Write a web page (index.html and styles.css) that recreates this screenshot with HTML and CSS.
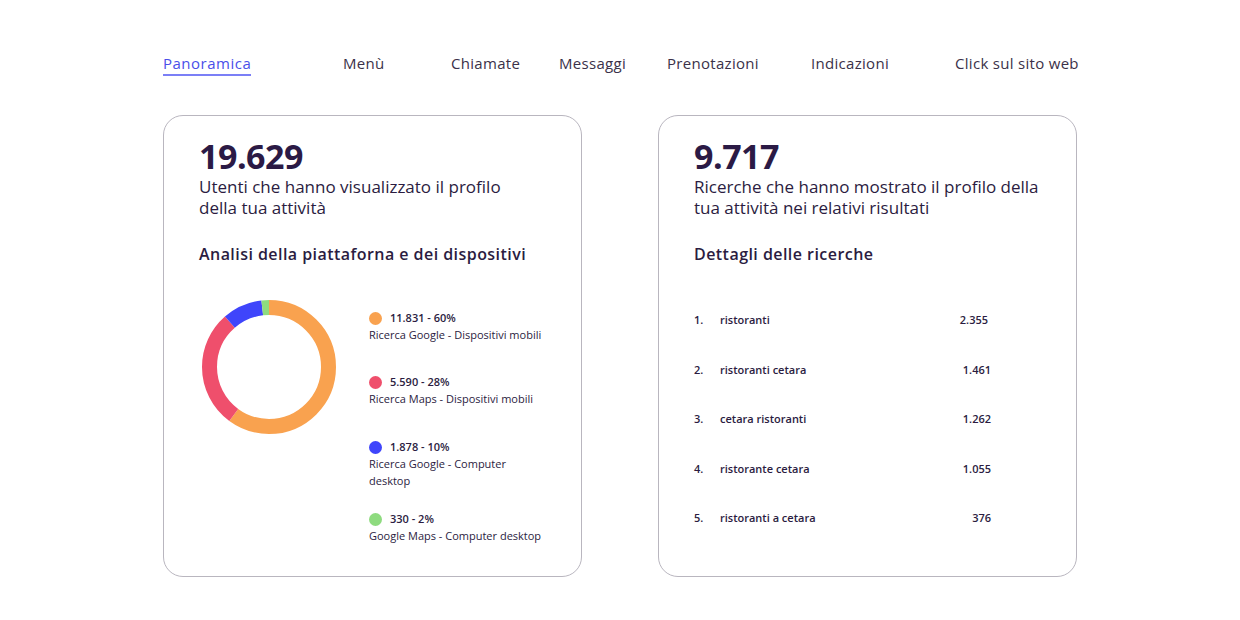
FILE: index.html
```html
<!DOCTYPE html>
<html lang="it">
<head>
<meta charset="utf-8">
<title>Panoramica</title>
<link rel="stylesheet" href="styles.css">
</head>
<body>
<div class="page">
  <nav class="tabs">
    <a class="tab active">Panoramica</a>
    <a class="tab">Menù</a>
    <a class="tab">Chiamate</a>
    <a class="tab">Messaggi</a>
    <a class="tab">Prenotazioni</a>
    <a class="tab">Indicazioni</a>
    <a class="tab">Click sul sito web</a>
  </nav>

  <div class="cards">
    <section class="card">
      <div class="big">19.629</div>
      <p class="sub">Utenti che hanno visualizzato il profilo<br>della tua attività</p>
      <h2 class="title">Analisi della piattaforna e dei dispositivi</h2>
      <div class="chart-row">
        <svg class="donut" width="134" height="134" viewBox="0 0 134 134">
          <g transform="rotate(-90 67 67)" fill="none" stroke-width="15">
            <circle cx="67" cy="67" r="59.5" stroke="#f9a24f" stroke-dasharray="224.3 373.8" stroke-dashoffset="0"/>
            <circle cx="67" cy="67" r="59.5" stroke="#ef4f6c" stroke-dasharray="106.3 373.8" stroke-dashoffset="-224.3"/>
            <circle cx="67" cy="67" r="59.5" stroke="#3f45fb" stroke-dasharray="35.8 373.8" stroke-dashoffset="-330.6"/>
            <circle cx="67" cy="67" r="59.5" stroke="#8edb7f" stroke-dasharray="7.4 373.8" stroke-dashoffset="-366.4"/>
          </g>
        </svg>
        <ul class="legend">
          <li class="item">
            <div class="val"><span class="dot orange"></span>11.831 - 60%</div>
            <div class="desc">Ricerca Google - Dispositivi mobili</div>
          </li>
          <li class="item">
            <div class="val"><span class="dot red"></span>5.590 - 28%</div>
            <div class="desc">Ricerca Maps - Dispositivi mobili</div>
          </li>
          <li class="item">
            <div class="val"><span class="dot blue"></span>1.878 - 10%</div>
            <div class="desc">Ricerca Google - Computer desktop</div>
          </li>
          <li class="item">
            <div class="val"><span class="dot green"></span>330 - 2%</div>
            <div class="desc">Google Maps - Computer desktop</div>
          </li>
        </ul>
      </div>
    </section>

    <section class="card">
      <div class="big">9.717</div>
      <p class="sub">Ricerche che hanno mostrato il profilo della<br>tua attività nei relativi risultati</p>
      <h2 class="title">Dettagli delle ricerche</h2>
      <ol class="ranks">
        <li class="rank"><span class="n">1.</span><span class="term">ristoranti</span><span class="count first">2.355</span></li>
        <li class="rank"><span class="n">2.</span><span class="term">ristoranti cetara</span><span class="count">1.461</span></li>
        <li class="rank"><span class="n">3.</span><span class="term">cetara ristoranti</span><span class="count">1.262</span></li>
        <li class="rank"><span class="n">4.</span><span class="term">ristorante cetara</span><span class="count">1.055</span></li>
        <li class="rank"><span class="n">5.</span><span class="term">ristoranti a cetara</span><span class="count">376</span></li>
      </ol>
    </section>
  </div>
</div>
</body>
</html>
```

FILE: styles.css
```css
* { box-sizing: border-box; }
html, body { margin: 0; padding: 0; background: #fff; }
body {
  font-family: "Open Sans", "Liberation Sans", sans-serif;
  color: #2b1c41;
}
.page {
  width: 914px;
  margin: 0 auto;
  padding-top: 53px;
}
.tabs {
  display: grid;
  grid-template-columns: 180px 108px 108px 108px 144px 144px auto;
  height: 23px;
}
.tab {
  font-size: 15px;
  line-height: 20px;
  color: #3b3149;
  font-weight: 400;
  letter-spacing: 0.3px;
  white-space: nowrap;
  justify-self: start;
}
.tab.active {
  color: #4a4fe9;
  letter-spacing: 0.5px;
  border-bottom: 2px solid #7b7ff6;
}
.cards {
  margin-top: 39px;
  display: grid;
  grid-template-columns: 419px 419px;
  justify-content: space-between;
}
.card {
  height: 462px;
  border: 1px solid #b9b6bf;
  border-radius: 20px;
  padding: 20px 35px 0 35px;
}
.big {
  font-size: 34px;
  line-height: 40px;
  font-weight: 700;
  color: #2b1a45;
  letter-spacing: -0.5px;
}
.sub {
  margin: 0;
  font-size: 17px;
  line-height: 21px;
  font-weight: 400;
  white-space: nowrap;
  color: #2b1c41;
}
.title {
  margin: 25px 0 0 0;
  font-size: 16px;
  line-height: 22px;
  font-weight: 600;
  letter-spacing: 0.45px;
  color: #2b1c41;
}
.chart-row {
  display: flex;
  align-items: flex-start;
  margin-top: 35px;
  padding-left: 3px;
}
.donut { display: block; flex: none; }
.legend {
  list-style: none;
  margin: 0 0 0 33px;
  padding: 11px 0 0 0;
  width: 174px;
  display: grid;
  grid-template-rows: 64px 65px 72px auto;
}
.val {
  display: flex;
  align-items: center;
  gap: 8px;
  font-size: 11px;
  line-height: 14px;
  font-weight: 600;
  color: #2b1c41;
}
.dot {
  width: 13px;
  height: 13px;
  border-radius: 50%;
  flex: none;
}
.orange { background: #f9a24f; }
.red { background: #ef4f6c; }
.blue { background: #3f45fb; }
.green { background: #8edb7f; }
.desc {
  font-size: 11px;
  line-height: 17px;
  margin-top: 1px;
  color: #2b1c41;
}
.ranks {
  list-style: none;
  margin: 30px 0 0 0;
  padding: 0;
  width: 297px;
}
.rank {
  display: flex;
  height: 49.5px;
  align-items: center;
  font-size: 11px;
  font-weight: 600;
  color: #2b1c41;
}
.n { width: 26px; flex: none; }
.term { flex: 1; }
.count { text-align: right; }
.count.first { padding-right: 3px; }
```
